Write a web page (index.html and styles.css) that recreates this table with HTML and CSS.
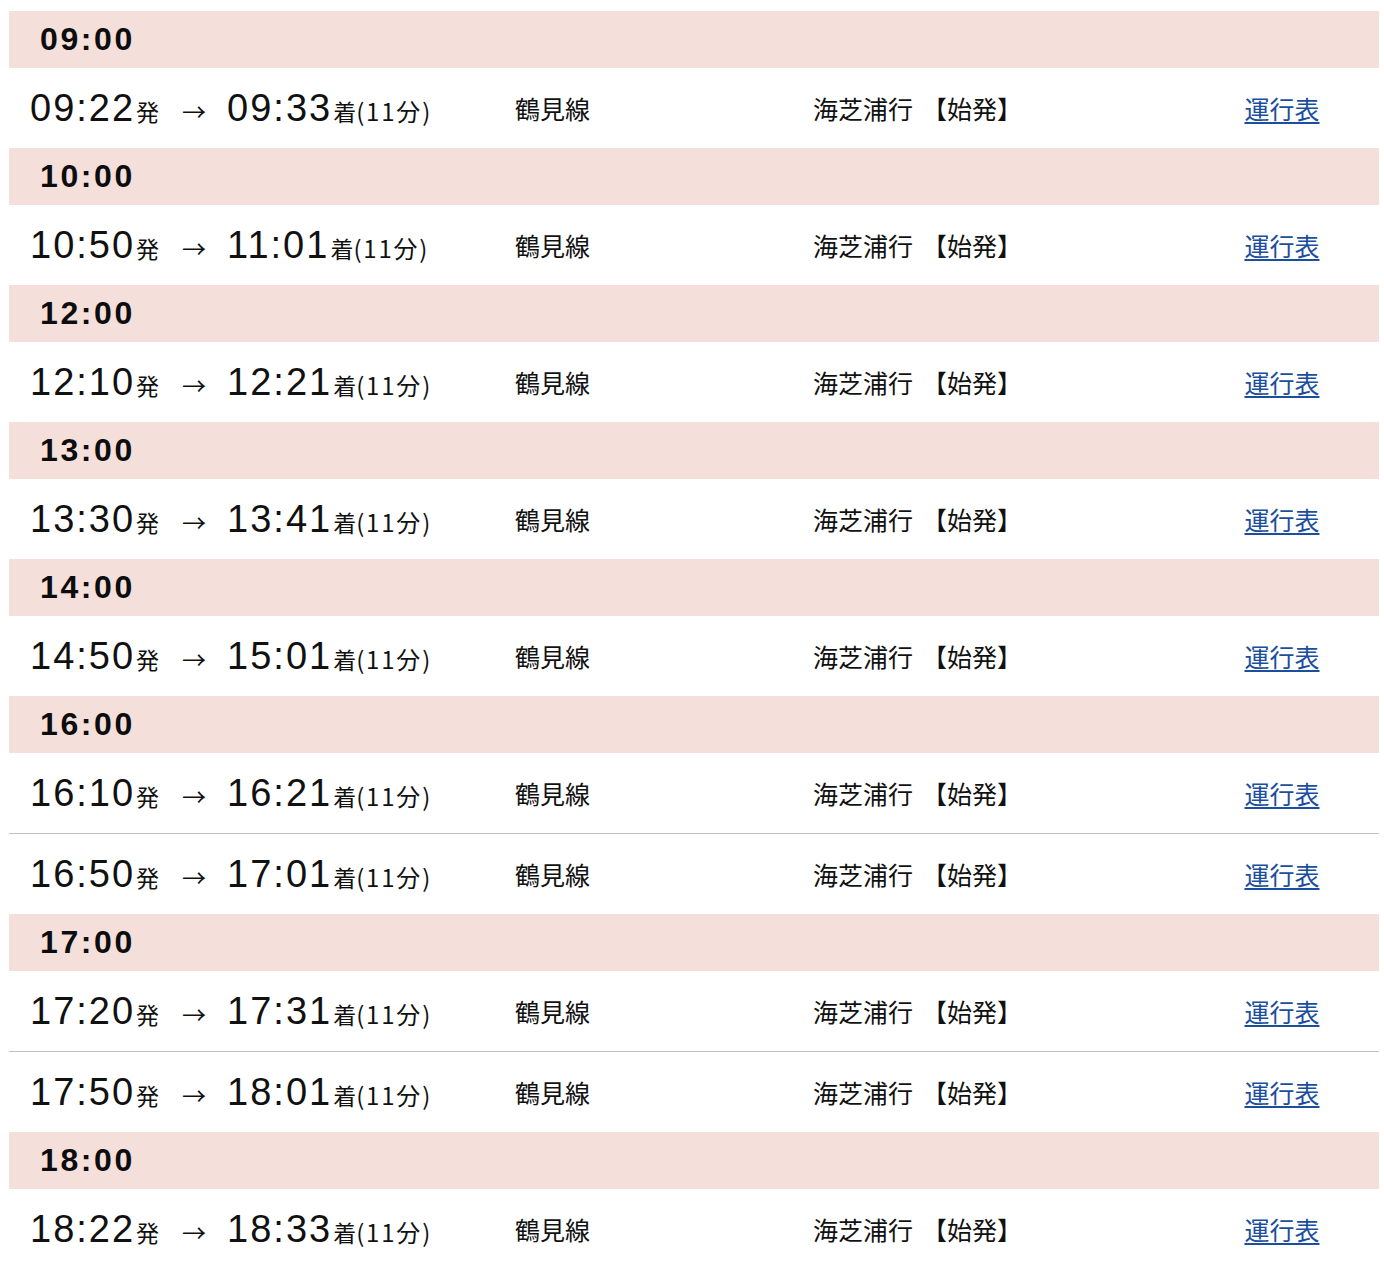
FILE: index.html
```html
<!DOCTYPE html>
<html lang="ja">
<head>
<meta charset="utf-8">
<title>時刻表</title>
<link rel="stylesheet" href="styles.css">
</head>
<body>
<div class="table">
  <div class="hour">09:00</div>
  <div class="row">
    <div class="time"><span class="t">09:22</span><span class="s">発</span><span class="arrow">→</span><span class="t">09:33</span><span class="s">着</span><span class="d">(11分)</span></div>
    <div class="line">鶴見線</div>
    <div class="dest">海芝浦行<span class="first">【始発】</span></div>
    <div class="link"><a href="#">運行表</a></div>
  </div>
  <div class="hour">10:00</div>
  <div class="row">
    <div class="time"><span class="t">10:50</span><span class="s">発</span><span class="arrow">→</span><span class="t">11:01</span><span class="s">着</span><span class="d">(11分)</span></div>
    <div class="line">鶴見線</div>
    <div class="dest">海芝浦行<span class="first">【始発】</span></div>
    <div class="link"><a href="#">運行表</a></div>
  </div>
  <div class="hour">12:00</div>
  <div class="row">
    <div class="time"><span class="t">12:10</span><span class="s">発</span><span class="arrow">→</span><span class="t">12:21</span><span class="s">着</span><span class="d">(11分)</span></div>
    <div class="line">鶴見線</div>
    <div class="dest">海芝浦行<span class="first">【始発】</span></div>
    <div class="link"><a href="#">運行表</a></div>
  </div>
  <div class="hour">13:00</div>
  <div class="row">
    <div class="time"><span class="t">13:30</span><span class="s">発</span><span class="arrow">→</span><span class="t">13:41</span><span class="s">着</span><span class="d">(11分)</span></div>
    <div class="line">鶴見線</div>
    <div class="dest">海芝浦行<span class="first">【始発】</span></div>
    <div class="link"><a href="#">運行表</a></div>
  </div>
  <div class="hour">14:00</div>
  <div class="row">
    <div class="time"><span class="t">14:50</span><span class="s">発</span><span class="arrow">→</span><span class="t">15:01</span><span class="s">着</span><span class="d">(11分)</span></div>
    <div class="line">鶴見線</div>
    <div class="dest">海芝浦行<span class="first">【始発】</span></div>
    <div class="link"><a href="#">運行表</a></div>
  </div>
  <div class="hour">16:00</div>
  <div class="row">
    <div class="time"><span class="t">16:10</span><span class="s">発</span><span class="arrow">→</span><span class="t">16:21</span><span class="s">着</span><span class="d">(11分)</span></div>
    <div class="line">鶴見線</div>
    <div class="dest">海芝浦行<span class="first">【始発】</span></div>
    <div class="link"><a href="#">運行表</a></div>
  </div>
  <div class="row next">
    <div class="time"><span class="t">16:50</span><span class="s">発</span><span class="arrow">→</span><span class="t">17:01</span><span class="s">着</span><span class="d">(11分)</span></div>
    <div class="line">鶴見線</div>
    <div class="dest">海芝浦行<span class="first">【始発】</span></div>
    <div class="link"><a href="#">運行表</a></div>
  </div>
  <div class="hour">17:00</div>
  <div class="row">
    <div class="time"><span class="t">17:20</span><span class="s">発</span><span class="arrow">→</span><span class="t">17:31</span><span class="s">着</span><span class="d">(11分)</span></div>
    <div class="line">鶴見線</div>
    <div class="dest">海芝浦行<span class="first">【始発】</span></div>
    <div class="link"><a href="#">運行表</a></div>
  </div>
  <div class="row next">
    <div class="time"><span class="t">17:50</span><span class="s">発</span><span class="arrow">→</span><span class="t">18:01</span><span class="s">着</span><span class="d">(11分)</span></div>
    <div class="line">鶴見線</div>
    <div class="dest">海芝浦行<span class="first">【始発】</span></div>
    <div class="link"><a href="#">運行表</a></div>
  </div>
  <div class="hour">18:00</div>
  <div class="row">
    <div class="time"><span class="t">18:22</span><span class="s">発</span><span class="arrow">→</span><span class="t">18:33</span><span class="s">着</span><span class="d">(11分)</span></div>
    <div class="line">鶴見線</div>
    <div class="dest">海芝浦行<span class="first">【始発】</span></div>
    <div class="link"><a href="#">運行表</a></div>
  </div>
</div>
</body>
</html>
```
FILE: styles.css
```css
html, body {
  background: #ffffff;
}
body {
  margin: 11px 5px 0 9px;
  font-family: "Liberation Sans", "Noto Sans CJK JP", sans-serif;
  color: #111111;
}
.table {
  display: flex;
  flex-direction: column;
}
.hour {
  height: 57px;
  background: #f4dfdb;
  display: flex;
  align-items: center;
  padding-left: 31px;
  font-size: 32px;
  font-weight: bold;
  letter-spacing: 2.6px;
  color: #0d0d0d;
}
.row {
  height: 80px;
  display: grid;
  grid-template-columns: 506px 298px 1fr 194px;
  align-items: center;
}
.row.next {
  border-top: 1px solid #c2c2c2;
}
.time {
  padding-left: 21px;
  display: flex;
  align-items: baseline;
  white-space: nowrap;
}
.t {
  font-family: "Liberation Sans", sans-serif;
  font-size: 38px;
  letter-spacing: 2px;
  color: #111111;
}
.s {
  font-family: "Noto Sans CJK JP", sans-serif;
  font-size: 23px;
  margin-left: 1px;
}
.arrow {
  font-family: "Noto Sans CJK JP", sans-serif;
  font-size: 24px;
  margin: 0 21px 0 23px;
}
.d {
  font-family: "Noto Sans CJK JP", sans-serif;
  font-size: 24px;
  letter-spacing: 1.8px;
}
.line, .dest, .link {
  font-family: "Noto Sans CJK JP", sans-serif;
  font-size: 25px;
  color: #111111;
}
.first {
  margin-left: 9px;
}
.link {
  text-align: center;
}
.link a {
  color: #1b4e9d;
  text-decoration: underline;
  text-underline-offset: 3px;
}
```
